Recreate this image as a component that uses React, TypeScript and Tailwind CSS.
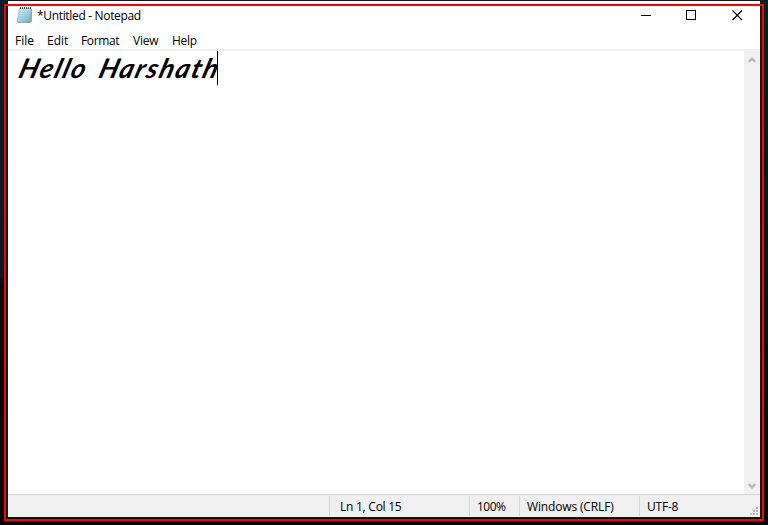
import React from "react";

function NotepadIcon() {
  return (
    <svg width="17" height="18" viewBox="0 0 17 18" className="-mt-px shrink-0">
      <defs>
        <linearGradient id="page" x1="0" y1="0" x2="1" y2="1">
          <stop offset="0" stopColor="#d3eff4" />
          <stop offset="0.5" stopColor="#a9dce8" />
          <stop offset="1" stopColor="#55a8bf" />
        </linearGradient>
      </defs>
      <path d="M4 3h12v13L14 17H2z" fill="#b5a58c" />
      <path d="M3.5 2.5h11.8L14 16H1z" fill="url(#page)" stroke="#7aabb7" strokeWidth=".6" />
      <path d="M3 6h11M2.7 8.5h11M2.3 11h11M2 13.5h11" stroke="#80bdcb" strokeWidth=".5" />
      <path d="M4.5 1v2M6.5 1v2M8.5 1v2M10.5 1v2M12.5 1v2M14.5 1v2" stroke="#46575e" strokeWidth="1" />
    </svg>
  );
}

const menu = [
  { label: "File", cls: "w-[32px]" },
  { label: "Edit", cls: "w-[34px]" },
  { label: "Format", cls: "w-[52px] tracking-[-0.35px]" },
  { label: "View", cls: "w-[39px] tracking-[-0.25px]" },
  { label: "Help", cls: "w-[40px] tracking-[-0.25px]" },
];

function Chevron({ down = false }: { down?: boolean }) {
  return (
    <svg width="8" height="6" viewBox="0 0 8 6" className={down ? "rotate-180" : ""}>
      <path d="M.7 4.9 4 1.6l3.3 3.3" fill="none" stroke="#b9b9b9" strokeWidth="2.2" />
    </svg>
  );
}

export default function App() {
  return (
    <div className="relative h-[525px] w-[768px] overflow-hidden bg-[linear-gradient(to_bottom,#03202b_0,#041b24_275px,#02080e_285px,#010509_100%)] pl-2 pt-px font-['Open_Sans','Noto_Sans',sans-serif] text-[12px] text-black">
      <div className="absolute inset-y-0 right-0 w-2 bg-[linear-gradient(to_bottom,#032023_0,#021619_250px,#010509_100%)]" />
      <div className="relative flex h-[516px] w-[752px] flex-col bg-white outline outline-[#14191b]">
        <header className="flex h-[30px] items-center pb-px pl-2">
          <NotepadIcon />
          <span className="ml-1 whitespace-nowrap tracking-[-0.33px]">*Untitled - Notepad</span>
          <div className="-mr-px ml-auto flex h-full">
            <svg width="46" height="29" shapeRendering="crispEdges"><path d="M18 14.5h10" stroke="#000" /></svg>
            <svg width="46" height="29" shapeRendering="crispEdges"><path d="M17.5 9.5h9v9h-9z" fill="none" stroke="#000" /></svg>
            <svg width="46" height="29"><path d="m17.5 9.5 9.5 9.5m0-9.5-9.5 9.5" fill="none" stroke="#000" strokeWidth="1.1" /></svg>
          </div>
        </header>
        <nav className="flex h-[20px] items-center border-b-2 border-[#f0f0f0] pl-[7px] pt-[2px]">
          {menu.map((m) => (
            <span key={m.label} className={`shrink-0 whitespace-nowrap ${m.cls}`}>{m.label}</span>
          ))}
        </nav>
        <main className="flex h-[443px]">
          <div className="flex flex-1 items-start pl-[12px]">
            <div className="flex h-[34px] items-center font-['Lato',sans-serif] text-[27px] font-bold italic leading-[36px]">
              <span className="w-[80px] origin-left -skew-x-[16deg] whitespace-nowrap tracking-[1.8px]">Hello</span>
              <span className="w-[117px] origin-left -skew-x-[16deg] whitespace-nowrap tracking-[1.7px]">Harshath</span>
            </div>
            <i className="relative h-[34px] w-px shrink-0 bg-black" />
          </div>
          <div className="flex w-4 flex-col items-center justify-between bg-[#f0f0f0] pb-[5px] pt-[6px]">
            <Chevron />
            <Chevron down />
          </div>
        </main>
        <footer className="flex h-[23px] items-center border-t border-[#d7d7d7] bg-[#f0f0f0]">
          <div className="w-[321px]" />
          <div className="flex h-5 w-[140px] items-center border-l border-[#d7d7d7] pl-[10px] pt-px tracking-[-0.25px]">Ln 1, Col 15</div>
          <div className="flex h-5 w-[50px] items-center border-l border-[#d7d7d7] pl-[7px] pt-px tracking-[-0.5px]">100%</div>
          <div className="flex h-5 w-[120px] items-center whitespace-nowrap border-l border-[#d7d7d7] pl-[7px] pt-px tracking-[-0.15px]">Windows (CRLF)</div>
          <div className="flex h-5 flex-1 items-center border-l border-[#d7d7d7] pl-[7px] pt-px tracking-[-0.2px]">UTF-8</div>
          <svg width="10" height="20" shapeRendering="crispEdges" fill="#bfbfbf">
            <path d="M6 11h2v2H6zM3 14h2v2H3zM6 14h2v2H6zM0 17h2v2H0zM3 17h2v2H3zM6 17h2v2H6z" />
          </svg>
        </footer>
      </div>
      <div className="pointer-events-none absolute left-1 top-1 h-[517px] w-[760px] border-2 border-[#ff0000]" />
    </div>
  );
}
